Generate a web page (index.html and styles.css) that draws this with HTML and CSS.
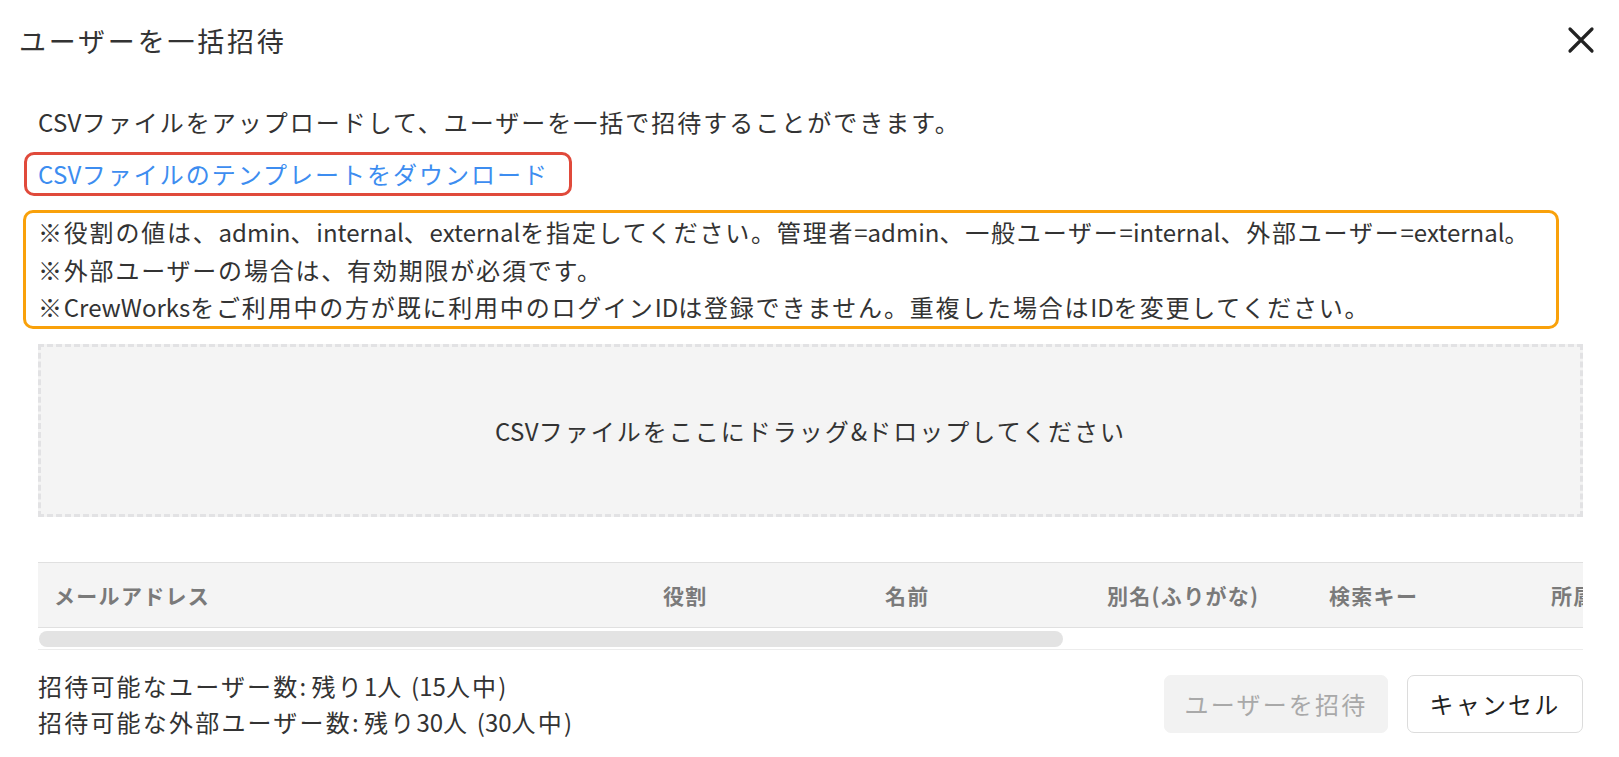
FILE: index.html
```html
<!DOCTYPE html>
<html lang="ja">
<head>
<meta charset="utf-8">
<title>ユーザーを一括招待</title>
<link rel="stylesheet" href="styles.css">
</head>
<body>
<div class="modal">
  <div class="modal-header">
    <h1 class="modal-title">ユーザーを一括招待</h1>
    <button class="close-btn" aria-label="閉じる">
      <svg width="28" height="28" viewBox="0 0 28 28"><path d="M3 3 L25 25 M25 3 L3 25" stroke="#222" stroke-width="3.2" stroke-linecap="round" fill="none"/></svg>
    </button>
  </div>
  <div class="modal-body">
    <p class="desc"><span class="en">CSV</span>ファイルをアップロードして、ユーザーを一括で招待することができます。</p>
    <div class="link-row"><a class="template-link" href="#"><span class="en">CSV</span>ファイルのテンプレートをダウンロード</a></div>
    <div class="notes">
      <p>※役割の値は、<span class="en">admin</span>、<span class="en">internal</span>、<span class="en">external</span>を指定してください。管理者<span class="en">=admin</span>、一般ユーザー<span class="en">=internal</span>、外部ユーザー<span class="en">=external</span>。</p>
      <p>※外部ユーザーの場合は、有効期限が必須です。</p>
      <p>※<span class="en">CrewWorks</span>をご利用中の方が既に利用中のログイン<span class="en">ID</span>は登録できません。重複した場合は<span class="en">ID</span>を変更してください。</p>
    </div>
    <div class="dropzone"><span class="en">CSV</span>ファイルをここにドラッグ<span class="en">&amp;</span>ドロップしてください</div>
    <div class="table-wrap">
      <div class="table-head">
        <div class="th th-email">メールアドレス</div>
        <div class="th">役割</div>
        <div class="th">名前</div>
        <div class="th">別名(ふりがな)</div>
        <div class="th">検索キー</div>
        <div class="th">所属</div>
      </div>
      <div class="scroll-track"><div class="scroll-thumb"></div></div>
    </div>
    <div class="footer">
      <div class="quota">
        <p>招待可能なユーザー数<span class="en">: </span>残り<span class="en">1</span>人 <span class="en">(15</span>人中<span class="en">)</span></p>
        <p>招待可能な外部ユーザー数<span class="en">: </span>残り<span class="en">30</span>人 <span class="en">(30</span>人中<span class="en">)</span></p>
      </div>
      <div class="actions">
        <button class="btn btn-primary" disabled>ユーザーを招待</button>
        <button class="btn btn-cancel">キャンセル</button>
      </div>
    </div>
  </div>
</div>
</body>
</html>
```
FILE: styles.css
```css
* { box-sizing: border-box; }
html, body { margin: 0; padding: 0; background: #fff; }
body {
  font-family: "Noto Sans CJK JP", "Noto Sans", sans-serif;
  color: #333;
  font-size: 24px;
  letter-spacing: 2px;
}
p { margin: 0; }
.en { letter-spacing: 0.3px; }
.modal { width: 1619px; height: 757px; overflow: hidden; }
.modal-header {
  height: 80px;
  display: flex;
  align-items: center;
  justify-content: space-between;
  padding: 0 24px 0 19px;
}
.modal-title {
  margin: 0;
  font-size: 27px;
  font-weight: 400;
  letter-spacing: 2.8px;
  color: #333;
}
.close-btn {
  border: 0;
  background: none;
  padding: 0;
  width: 28px;
  height: 28px;
  display: flex;
}
.modal-body { padding: 0 36px 0 38px; }
.desc { line-height: 36px; margin-top: 24px; }
.link-row { margin-top: 12px; }
.template-link {
  display: inline-block;
  margin-left: -14px;
  padding: 3px 20px 3px 11px;
  border: 3px solid #e04a3b;
  border-radius: 10px;
  color: #3d8df0;
  text-decoration: none;
  line-height: 32px;
}
.notes {
  margin-top: 14px;
  margin-left: -15px;
  width: 1536px;
  border: 3px solid #f9a10a;
  border-radius: 10px;
  padding: 0 12px;
  line-height: 37.5px;
  letter-spacing: 1.8px;
  white-space: nowrap;
}
.notes .en { letter-spacing: 0; }
.dropzone {
  margin-top: 15px;
  height: 173px;
  border: 3px dashed #e2e2e4;
  background: #f4f4f4;
  display: flex;
  align-items: center;
  justify-content: center;
  color: #333;
}
.table-wrap {
  margin-top: 45px;
  overflow: hidden;
  border-bottom: 1px solid #ececec;
}
.table-head {
  display: flex;
  width: 1800px;
  height: 66px;
  align-items: center;
  background: #f4f4f4;
  border-top: 1px solid #e0e0e0;
  border-bottom: 1px solid #e0e0e0;
}
.th {
  flex: 0 0 222px;
  padding-left: 16px;
  font-size: 21px;
  font-weight: 700;
  color: #7a7a7a;
  letter-spacing: 1.3px;
  white-space: nowrap;
}
.th-email { flex-basis: 609px; }
.scroll-track { height: 21px; padding: 3px 0 2px 1px; }
.scroll-thumb {
  width: 1024px;
  height: 16px;
  background: #e3e3e3;
  border-radius: 8px;
}
.footer {
  display: flex;
  align-items: center;
  justify-content: space-between;
  padding-top: 18px;
}
.quota { line-height: 36px; letter-spacing: 2.2px; }
.quota .en { letter-spacing: 0; }
.actions { display: flex; gap: 19px; }
.btn {
  height: 58px;
  border-radius: 7px;
  font-family: inherit;
  font-size: 24px;
  letter-spacing: 2.2px;
  padding: 0;
}
.btn-primary {
  width: 224px;
  background: #f2f2f2;
  border: 1px solid #f2f2f2;
  color: #a9a9a9;
}
.btn-cancel {
  width: 176px;
  background: #fff;
  border: 1px solid #dcdcdc;
  color: #222;
}
```
